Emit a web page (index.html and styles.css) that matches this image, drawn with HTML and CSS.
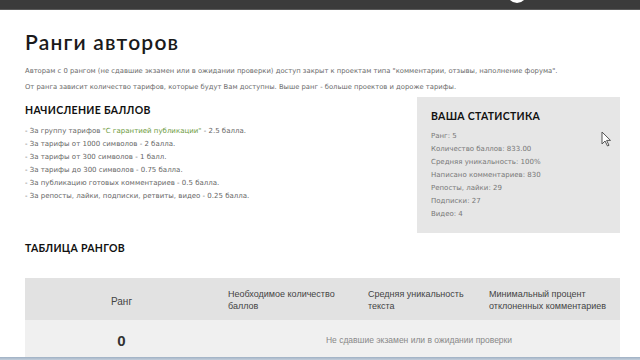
FILE: index.html
```html
<!DOCTYPE html>
<html lang="ru">
<head>
    <meta charset="UTF-8">
    <meta name="viewport" content="width=device-width, initial-scale=1.0">
    <title>Ранги авторов</title>
    <link rel="stylesheet" href="styles.css">
</head>
<body>
    <header class="topbar">
        <span class="avatar"></span>
    </header>

    <main class="page">
        <h1 class="page-title">Ранги авторов</h1>
        <p class="intro">
            Авторам с 0 рангом (не сдавшие экзамен или в ожидании проверки) доступ закрыт к проектам типа "комментарии, отзывы, наполнение форума".<br>
            От ранга зависит количество тарифов, которые будут Вам доступны. Выше ранг - больше проектов и дороже тарифы.
        </p>

        <div class="points-row">
            <section class="points">
                <h2 class="section-title">Начисление баллов</h2>
                <ul class="points-list">
                    <li>- За группу тарифов <span class="accent">"С гарантией публикации"</span> - 2.5 балла.</li>
                    <li>- За тарифы от 1000 символов - 2 балла.</li>
                    <li>- За тарифы от 300 символов - 1 балл.</li>
                    <li>- За тарифы до 300 символов - 0.75 балла.</li>
                    <li>- За публикацию готовых комментариев - 0.5 балла.</li>
                    <li>- За репосты, лайки, подписки, ретвиты, видео - 0.25 балла.</li>
                </ul>
            </section>

            <aside class="stats">
                <h2 class="section-title">Ваша статистика</h2>
                <ul class="stats-list">
                    <li>Ранг: 5</li>
                    <li>Количество баллов: 833.00</li>
                    <li>Средняя уникальность: 100%</li>
                    <li>Написано комментариев: 830</li>
                    <li>Репосты, лайки: 29</li>
                    <li>Подписки: 27</li>
                    <li>Видео: 4</li>
                </ul>
                <svg class="cursor" width="10" height="16" viewBox="0 0 10 16">
                    <path d="M1 1 L1 13 L4 10 L6.5 15 L8 14.3 L5.6 9.4 L9.5 9.4 Z" fill="#fff" stroke="#555" stroke-width="1" stroke-linejoin="round"/>
                </svg>
            </aside>
        </div>

        <h2 class="section-title table-title">Таблица рангов</h2>

        <table class="ranks">
            <thead>
                <tr>
                    <th class="col-rank">Ранг</th>
                    <th class="col-points">Необходимое количество баллов</th>
                    <th class="col-unique">Средняя уникальность текста</th>
                    <th class="col-reject">Минимальный процент отклоненных комментариев</th>
                </tr>
            </thead>
            <tbody>
                <tr>
                    <td class="rank-num">0</td>
                    <td class="rank-note" colspan="3">Не сдавшие экзамен или в ожидании проверки</td>
                </tr>
            </tbody>
        </table>
    </main>

    <div class="taskbar"></div>
</body>
</html>
```

FILE: styles.css
```css
body {
    margin: 0;
    padding: 0;
    background: #fff;
    color: #666;
    font-family: 'DejaVu Sans', Verdana, sans-serif;
    overflow: hidden;
}

.topbar {
    height: 10px;
    background: #3b3b3b;
    border-bottom: 1px solid #5a5a5a;
    box-sizing: border-box;
    display: flex;
    align-items: flex-end;
    overflow: hidden;
    padding-left: 507px;
}

.avatar {
    width: 20px;
    height: 20px;
    flex-shrink: 0;
    border-radius: 50%;
    background: #fff;
    margin-bottom: 6px;
}

.page {
    padding: 0 20px 0 25px;
}

.page-title {
    font-family: 'Lato', sans-serif;
    font-weight: 600;
    font-size: 21px;
    line-height: 24px;
    letter-spacing: 1.2px;
    color: #1a1a1a;
    margin: 20px 0 0;
}

.intro {
    font-size: 6.8px;
    line-height: 16px;
    margin: 9px 0 0;
    color: #6a6a6a;
}

.points-row {
    display: flex;
    justify-content: space-between;
    align-items: flex-start;
    margin-top: 2px;
}

.section-title {
    font-family: 'Lato', sans-serif;
    font-weight: 700;
    font-size: 10.5px;
    line-height: 16px;
    letter-spacing: 0.3px;
    text-transform: uppercase;
    color: #111;
    margin: 0;
}

.points {
    padding-top: 5px;
}

.points-list {
    list-style: none;
    padding: 0;
    margin: 7px 0 0;
    font-size: 7px;
    line-height: 13px;
}

.accent {
    color: #6b9a3c;
}

.stats {
    position: relative;
    width: 203px;
    box-sizing: border-box;
    background: #e6e6e6;
    padding: 11px 14px 12px;
}

.stats-list {
    list-style: none;
    padding: 0;
    margin: 6px 0 0;
    font-size: 7px;
    line-height: 13px;
    color: #777;
}

.cursor {
    position: absolute;
    left: 184px;
    top: 34px;
}

.table-title {
    margin-top: 7px;
}

.ranks {
    width: 100%;
    border-collapse: collapse;
    margin-top: 22px;
    font-family: 'Liberation Sans', Arial, sans-serif;
}

.ranks th {
    background: #e2e2e2;
    color: #444;
    font-weight: normal;
    font-size: 9px;
    line-height: 12px;
    text-align: left;
    padding: 10px 10px 8px;
    height: 24px;
    vertical-align: top;
}

.ranks th.col-rank {
    text-align: center;
    vertical-align: middle;
    font-size: 10px;
    padding: 12px 10px 6px;
    width: 173px;
}

.col-points {
    width: 120px;
}

.col-unique {
    width: 101px;
}

.ranks td {
    background: #f0f0f0;
    height: 40px;
    padding: 0 10px;
}

.rank-num {
    text-align: center;
    font-weight: bold;
    font-size: 15px;
    color: #333;
}

.rank-note {
    text-align: center;
    font-size: 8.5px;
    color: #888;
}

.taskbar {
    position: fixed;
    left: 0;
    right: 0;
    bottom: 0;
    height: 3px;
    background: linear-gradient(#9fb0c4, #c4cfdb);
}
```
